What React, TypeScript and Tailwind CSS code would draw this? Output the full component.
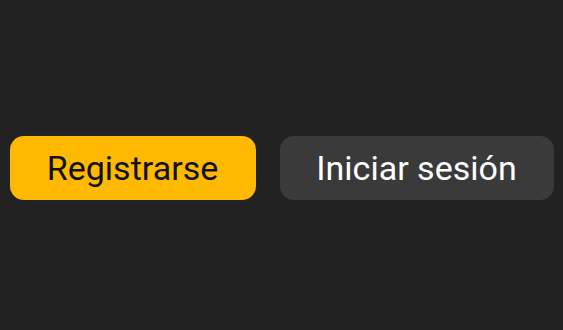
export default function App() {
  return (
    <div className="flex h-[330px] w-full items-center justify-center bg-[#222222] font-['Roboto',sans-serif]">
      <div className="flex items-center gap-6 pt-[6px]">
        <button
          type="button"
          className="h-16 w-[246px] rounded-[14px] bg-[#ffb900] text-[34px] leading-none text-[#111111]"
        >
          Registrarse
        </button>
        <button
          type="button"
          className="h-16 w-[274px] rounded-[14px] bg-[#3a3a3a] text-[34px] leading-none text-white"
        >
          Iniciar sesión
        </button>
      </div>
    </div>
  );
}
